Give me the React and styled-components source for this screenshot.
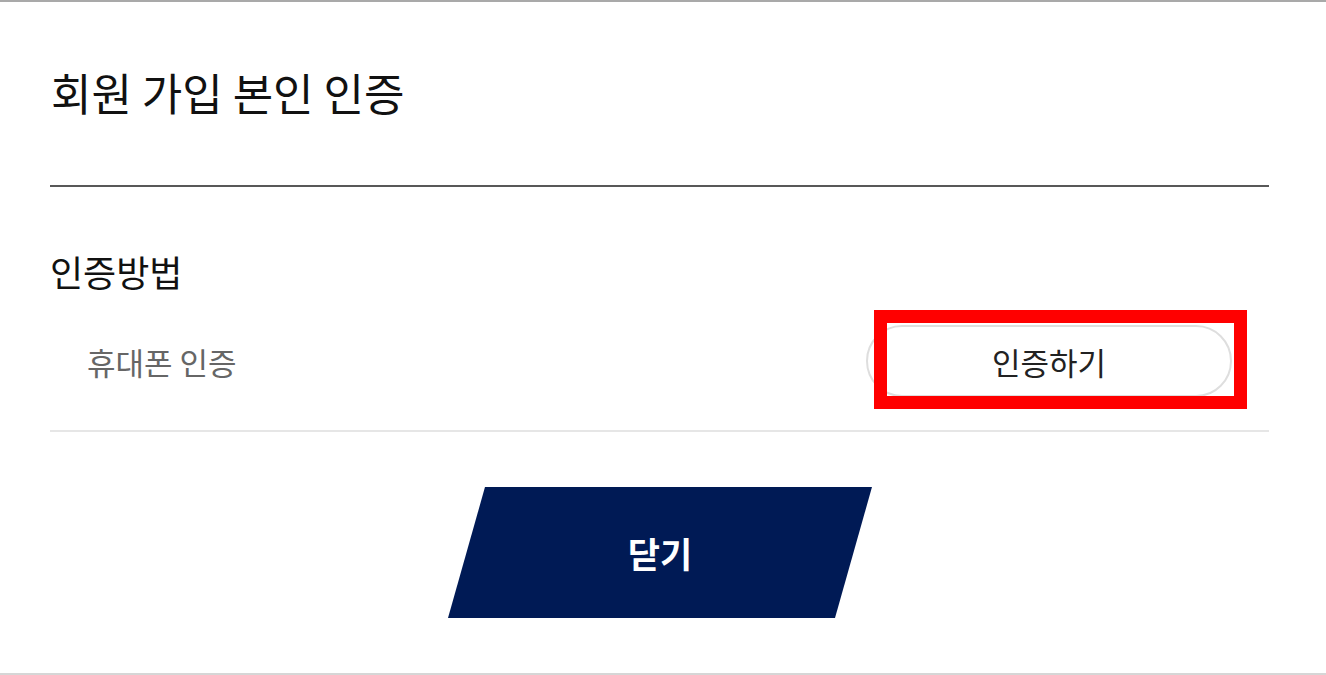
import React from 'react';
import styled, { createGlobalStyle } from 'styled-components';

const GlobalStyle = createGlobalStyle`
  html, body {
    margin: 0;
    padding: 0;
    background: #fff;
  }
  body {
    font-family: "Noto Sans CJK KR", "Noto Sans", sans-serif;
  }
`;

function App() {
  return (
    <>
      <GlobalStyle />
      <Modal>
        <Header>
          <Title>회원 가입 본인 인증</Title>
        </Header>
        <Section>
          <Label>인증방법</Label>
          <MethodRow>
            <MethodName>휴대폰 인증</MethodName>
            <ButtonWrap>
              <VerifyButton>인증하기</VerifyButton>
              <Highlight />
            </ButtonWrap>
          </MethodRow>
        </Section>
        <Footer>
          <CloseButton>닫기</CloseButton>
        </Footer>
      </Modal>
    </>
  );
}

const Modal = styled.div`
  box-sizing: border-box;
  height: 675px;
  padding: 0 57px 0 50px;
  border-top: 2px solid #a9a9a9;
  border-bottom: 2px solid #d6d6d6;
  overflow: hidden;
`;

const Header = styled.div`
  padding: 68px 0 71px 1px;
  border-bottom: 2px solid #585858;
`;

const Title = styled.h1`
  margin: 0;
  font-size: 44px;
  line-height: 44px;
  font-weight: 400;
  color: #111;
`;

const Section = styled.div`
  padding-top: 66px;
  border-bottom: 2px solid #e6e6e6;
`;

const Label = styled.h2`
  margin: 0;
  font-size: 36px;
  line-height: 36px;
  font-weight: 400;
  color: #111;
`;

const MethodRow = styled.div`
  display: flex;
  align-items: center;
  justify-content: space-between;
  height: 72px;
  margin: 36px 0 33px;
  padding: 0 37px 0 37px;
`;

const MethodName = styled.span`
  font-size: 31px;
  color: #666;
`;

const ButtonWrap = styled.div`
  position: relative;
`;

const VerifyButton = styled.button`
  box-sizing: border-box;
  width: 366px;
  height: 72px;
  border: 2px solid #dedede;
  border-radius: 36px;
  background: #fff;
  font-family: inherit;
  font-size: 31px;
  color: #222;
  cursor: pointer;
`;

const Highlight = styled.div`
  position: absolute;
  left: 8px;
  top: -15px;
  width: 373px;
  height: 99px;
  box-sizing: border-box;
  border: 13px solid #ff0000;
  pointer-events: none;
`;

const Footer = styled.div`
  display: flex;
  justify-content: center;
  padding-top: 55px;
  padding-left: 1px;
`;

const CloseButton = styled.button`
  width: 424px;
  height: 131px;
  border: none;
  background: #001a55;
  clip-path: polygon(37px 0, 100% 0, calc(100% - 37px) 100%, 0 100%);
  color: #fff;
  font-family: inherit;
  font-size: 35px;
  font-weight: 700;
  cursor: pointer;
`;

export default App;
